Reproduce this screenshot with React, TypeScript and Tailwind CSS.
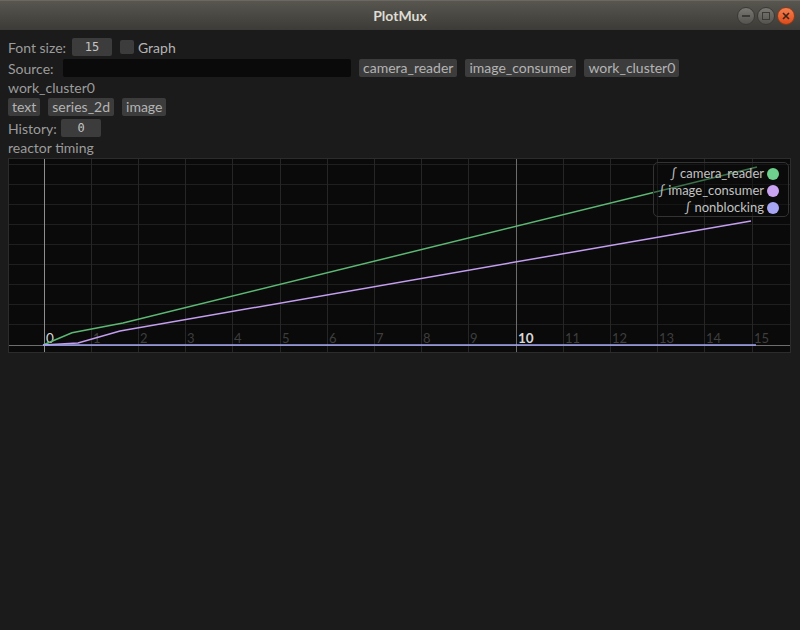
import React from 'react';

const FONT = { fontFamily: 'Lato, "Noto Sans", sans-serif' };
const MONO = { fontFamily: '"DejaVu Sans Mono", "Liberation Mono", monospace' };

// plot geometry (local to the plot frame)
const X0 = 35.5;
const DX = 47.2;
const AXIS_Y = 187;
const H_LINES = [6, 26, 46, 66, 86, 106, 126, 146, 166];

const SERIES = [
  { name: 'camera_reader', color: '#5cb874', dot: '#6fcf8c', pts: '35,187 64,174.7 115,165 749,9' },
  { name: 'image_consumer', color: '#c49ef0', dot: '#c9a3f2', pts: '35,187 70,185 112,173 743,63' },
  { name: 'nonblocking', color: '#a3a3f2', dot: '#a6a6f5', pts: '35,187 748,187' },
];

function Btn({ children }: { children: React.ReactNode }) {
  return (
    <div className="h-[18px] px-1 flex items-center rounded-[2px] bg-[#3c3c3c] text-[#b4b4b4] text-[14px] leading-none whitespace-nowrap">
      {children}
    </div>
  );
}

function NumBox({ value, w }: { value: string; w: string }) {
  return (
    <div
      className={`h-[18px] ${w} shrink-0 flex items-center justify-center rounded-[2px] bg-[#3c3c3c] text-[#c4c4c4] text-[12px] leading-none`}
      style={MONO}
    >
      {value}
    </div>
  );
}

function TitleBar() {
  return (
    <div className="h-[30px] relative flex items-center justify-center bg-gradient-to-b from-[#58564f] to-[#3c3b37] border-t border-[#6a6862]">
      <span className="text-[14px] font-bold text-[#dfdbd2]">PlotMux</span>
      <div className="absolute right-[5px] top-[6px] flex gap-[2px]">
        <div className="w-[18px] h-[18px] rounded-full bg-gradient-to-b from-[#7a7872] to-[#55534e] border border-[#3a3935] flex items-center justify-center">
          <div className="w-[8px] h-[2px] bg-[#3a3935]" />
        </div>
        <div className="w-[18px] h-[18px] rounded-full bg-gradient-to-b from-[#7a7872] to-[#55534e] border border-[#3a3935] flex items-center justify-center">
          <div className="w-[8px] h-[8px] border-[1.5px] border-[#3a3935]" />
        </div>
        <div className="w-[18px] h-[18px] rounded-full bg-gradient-to-b from-[#f4804f] to-[#de4a17] border border-[#8a3a1a] flex items-center justify-center">
          <svg width="8" height="8" viewBox="0 0 8 8">
            <path d="M1 1 L7 7 M7 1 L1 7" stroke="#3c2418" strokeWidth="1.6" />
          </svg>
        </div>
      </div>
    </div>
  );
}

function Plot() {
  const ticks = Array.from({ length: 16 }, (_, i) => i);
  return (
    <div className="relative w-[783px] h-[195px]">
      <svg width="783" height="195" className="block">
        <rect x="0.5" y="0.5" width="782" height="194" fill="#0a0a0a" stroke="#2c2c2c" />
        {H_LINES.map((y) => (
          <line key={y} x1="1" x2="782" y1={y + 0.5} y2={y + 0.5} stroke="#1f1f1f" />
        ))}
        {ticks.map((i) => {
          const x = Math.round(X0 + DX * i) + 0.5;
          const stroke = i === 0 ? '#8e8e8e' : i === 10 ? '#6c6c6c' : '#262626';
          return <line key={i} x1={x} x2={x} y1="1" y2="194" stroke={stroke} />;
        })}
        <line x1="1" x2="782" y1={AXIS_Y + 0.5} y2={AXIS_Y + 0.5} stroke="#6e6e6e" />
        {ticks.map((i) => {
          const x = Math.round(X0 + DX * i) + 2;
          const major = i === 0 || i === 10;
          return (
            <text
              key={i}
              x={x}
              y="185"
              fontSize={major ? 13.5 : 13}
              fill={major ? '#d8d8d8' : '#3e3e3e'}
              fontWeight={i === 10 ? 700 : 400}
              style={FONT}
            >
              {i}
            </text>
          );
        })}
        {SERIES.map((s) => (
          <polyline key={s.name} points={s.pts} fill="none" stroke={s.color} strokeWidth="1.5" />
        ))}
      </svg>

      {/* legend */}
      <div className="absolute right-[2px] top-[4px] w-[136px] h-[55px] rounded-[5px] border border-[#333333] bg-[#0a0a0a]/40 pt-[2px] pr-[9px] flex flex-col">
        {SERIES.map((s) => (
          <div key={s.name} className="h-[17px] flex items-center justify-end gap-[3px]">
            <span className="text-[13px] leading-none text-[#c2c2c2] whitespace-nowrap">∫ {s.name}</span>
            <span className="w-[12px] h-[12px] rounded-full" style={{ backgroundColor: s.dot }} />
          </div>
        ))}
      </div>
    </div>
  );
}

export default function App() {
  return (
    <div className="w-[800px] h-[630px] bg-[#1b1b1b] flex flex-col overflow-hidden" style={FONT}>
      <TitleBar />
      <div className="flex flex-col gap-[3px] pt-[8px] px-[8px] text-[14px] text-[#9c9c9c] whitespace-nowrap">
        <div className="h-[18px] flex items-center gap-2">
          <span className="w-[56px] shrink-0">Font size:</span>
          <NumBox value="15" w="w-[40px]" />
          <div className="flex items-center gap-1">
            <div className="w-[14px] h-[14px] rounded-[2px] bg-[#3c3c3c]" />
            <span className="text-[#b4b4b4]">Graph</span>
          </div>
        </div>
        <div className="h-[18px] flex items-center gap-2">
          <span className="w-[47px] shrink-0">Source:</span>
          <div className="w-[288px] h-[18px] shrink-0 rounded-[2px] bg-[#0a0a0a]" />
          <Btn>camera_reader</Btn>
          <Btn>image_consumer</Btn>
          <Btn>work_cluster0</Btn>
        </div>
        <div className="h-[15px] flex items-center">work_cluster0</div>
        <div className="h-[18px] flex items-center gap-2">
          <Btn>text</Btn>
          <Btn>series_2d</Btn>
          <Btn>image</Btn>
        </div>
        <div className="h-[18px] flex items-center gap-2">
          <span className="w-[45px] shrink-0">History:</span>
          <NumBox value="0" w="w-[40px]" />
        </div>
        <div className="h-[15px] flex items-center">reactor timing</div>
        <Plot />
      </div>
    </div>
  );
}
